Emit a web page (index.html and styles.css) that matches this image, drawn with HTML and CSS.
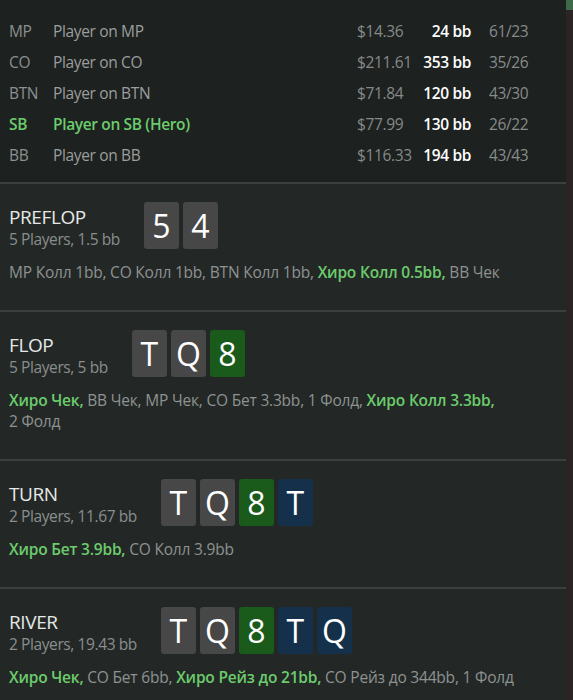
FILE: index.html
```html
<!DOCTYPE html>
<html lang="ru">
<head>
<meta charset="utf-8">
<link rel="stylesheet" href="styles.css">
</head>
<body>
<div class="app">
  <div class="content">
    <div class="players">
      <div class="prow"><span class="pos">MP</span><span class="name">Player on MP</span><span class="money">$14.36</span><span class="bb">24 bb</span><span class="stat">61/23</span></div>
      <div class="prow"><span class="pos">CO</span><span class="name">Player on CO</span><span class="money">$211.61</span><span class="bb">353 bb</span><span class="stat">35/26</span></div>
      <div class="prow"><span class="pos">BTN</span><span class="name">Player on BTN</span><span class="money">$71.84</span><span class="bb">120 bb</span><span class="stat">43/30</span></div>
      <div class="prow hero"><span class="pos">SB</span><span class="name">Player on SB (Hero)</span><span class="money">$77.99</span><span class="bb">130 bb</span><span class="stat">26/22</span></div>
      <div class="prow"><span class="pos">BB</span><span class="name">Player on BB</span><span class="money">$116.33</span><span class="bb">194 bb</span><span class="stat">43/43</span></div>
    </div>

    <section class="street">
      <div class="street-head">
        <div class="street-info">
          <div class="street-name">PREFLOP</div>
          <div class="street-sub">5 Players, 1.5 bb</div>
        </div>
        <div class="cards">
          <span class="card gray">5</span><span class="card gray">4</span>
        </div>
      </div>
      <p class="actions">MP Колл 1bb, CO Колл 1bb, BTN Колл 1bb, <b class="h">Хиро Колл 0.5bb,</b> BB Чек</p>
    </section>

    <section class="street">
      <div class="street-head">
        <div class="street-info">
          <div class="street-name">FLOP</div>
          <div class="street-sub">5 Players, 5 bb</div>
        </div>
        <div class="cards">
          <span class="card gray">T</span><span class="card gray">Q</span><span class="card green">8</span>
        </div>
      </div>
      <p class="actions"><b class="h">Хиро Чек,</b> BB Чек, MP Чек, CO Бет 3.3bb, 1 Фолд, <b class="h">Хиро Колл 3.3bb,</b><br>2 Фолд</p>
    </section>

    <section class="street">
      <div class="street-head">
        <div class="street-info">
          <div class="street-name">TURN</div>
          <div class="street-sub">2 Players, 11.67 bb</div>
        </div>
        <div class="cards">
          <span class="card gray">T</span><span class="card gray">Q</span><span class="card green">8</span><span class="card blue">T</span>
        </div>
      </div>
      <p class="actions"><b class="h">Хиро Бет 3.9bb,</b> CO Колл 3.9bb</p>
    </section>

    <section class="street">
      <div class="street-head">
        <div class="street-info">
          <div class="street-name">RIVER</div>
          <div class="street-sub">2 Players, 19.43 bb</div>
        </div>
        <div class="cards">
          <span class="card gray">T</span><span class="card gray">Q</span><span class="card green">8</span><span class="card blue">T</span><span class="card blue">Q</span>
        </div>
      </div>
      <p class="actions"><b class="h">Хиро Чек,</b> CO Бет 6bb, <b class="h">Хиро Рейз до 21bb,</b> CO Рейз до 344bb, 1 Фолд</p>
    </section>
  </div>
  <div class="scrollbar"><div class="thumb"></div></div>
</div>
</body>
</html>
```

FILE: styles.css
```css
html, body {
  margin: 0;
  padding: 0;
  height: 100%;
  overflow: hidden;
  background: #232827;
  font-family: "Open Sans", "Noto Sans", sans-serif;
}

.app {
  display: flex;
  height: 700px;
}

.content {
  flex: 1;
  background: #232827;
}

.scrollbar {
  width: 7px;
  background: #2a2524;
}

.thumb {
  height: 10px;
  background: #3e6a4a;
}

.players {
  background: #1d2120;
  padding: 15px 0 12px 9px;
  border-bottom: 2px solid #3b403f;
}

.prow {
  display: grid;
  grid-template-columns: 44px 304px 78px 36px 80px;
  align-items: center;
  height: 31px;
  font-size: 15.5px;
  letter-spacing: -0.35px;
  color: #8c908f;
}

.prow .name { color: #9b9e9d; }
.prow .money { color: #868a89; }
.prow .bb {
  color: #ffffff;
  font-weight: 600;
  white-space: nowrap;
  justify-self: end;
}
.prow .stat { padding-left: 18px; color: #878b8a; }

.prow.hero .pos,
.prow.hero .name {
  color: #6ccc6c;
  font-weight: 600;
}

.street {
  padding: 18px 0 27px 9px;
  border-bottom: 2px solid #3b403f;
}

.street-head {
  display: flex;
  align-items: flex-end;
  height: 48px;
}

.street-info {
  margin-right: 24px;
  padding-bottom: 1px;
}

.street-name {
  font-size: 19px;
  line-height: 24px;
  color: #e6e8e7;
  letter-spacing: -0.4px;
}

.street-sub {
  font-size: 15.5px;
  line-height: 20px;
  color: #8a8e8d;
  letter-spacing: -0.4px;
}

.cards {
  display: flex;
  gap: 4px;
  align-self: flex-start;
}

.card {
  width: 35px;
  height: 47px;
  border-radius: 3px;
  color: #ffffff;
  font-size: 32px;
  line-height: 47px;
  text-align: center;
}

.card.gray { background: #474747; }
.card.green { background: #1a5a1a; }
.card.blue { background: #15304b; }

.actions {
  margin: 12px 0 0;
  font-size: 15.5px;
  line-height: 21px;
  color: #8e9291;
  letter-spacing: -0.2px;
}

.actions .h {
  color: #6ccc6c;
  font-weight: 600;
}
```
